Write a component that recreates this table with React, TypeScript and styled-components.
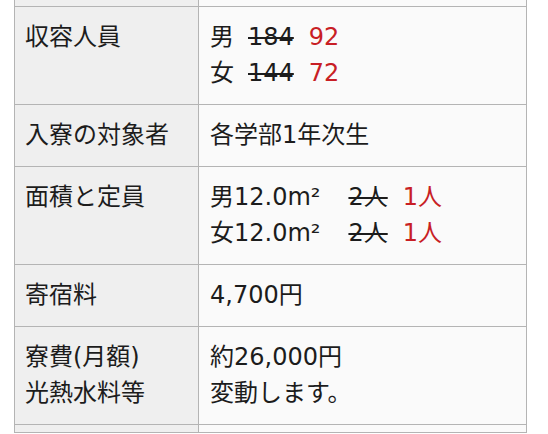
import React from 'react';
import styled, { createGlobalStyle } from 'styled-components';

const GlobalStyle = createGlobalStyle`
  html, body {
    margin: 0;
    padding: 0;
    background: #ffffff;
    overflow: hidden;
  }
`;

const Page = styled.div`
  padding-left: 14px;
  font-family: 'DejaVu Sans', 'Noto Sans CJK JP', sans-serif;
  font-size: 24px;
  line-height: 36px;
  color: #1c1c1c;
`;

const Table = styled.table`
  border-collapse: separate;
  border-spacing: 0;
  table-layout: fixed;
  width: 513px;
`;

const Row = styled.tr<{ $height?: number }>`
  height: ${({ $height }) => ($height ? `${$height}px` : 'auto')};
`;

const Head = styled.th<{ $empty?: boolean }>`
  box-sizing: border-box;
  width: 185px;
  padding: ${({ $empty }) => ($empty ? '0' : '12px 8px 13px 10px')};
  background: #efefef;
  border-left: 1px solid #b4b4b4;
  border-right: 1px solid #b4b4b4;
  border-bottom: 1px solid #b4b4b4;
  text-align: left;
  vertical-align: top;
  font-weight: normal;
  white-space: nowrap;
`;

const Cell = styled.td<{ $empty?: boolean }>`
  box-sizing: border-box;
  width: 328px;
  padding: ${({ $empty }) => ($empty ? '0' : '12px 8px 13px 11px')};
  background: #fafafa;
  border-right: 1px solid #b4b4b4;
  border-bottom: 1px solid #b4b4b4;
  vertical-align: top;
  white-space: nowrap;
`;

const Line = styled.div`
  display: block;
`;

const Old = styled.span<{ $gap?: number }>`
  margin-left: ${({ $gap }) => $gap ?? 0}px;
  text-decoration: line-through;
  text-decoration-thickness: 1.5px;
`;

const New = styled.span<{ $gap?: number }>`
  margin-left: ${({ $gap }) => $gap ?? 0}px;
  color: #c81e25;
`;

const App: React.FC = () => {
  return (
    <Page>
      <GlobalStyle />
      <Table>
        <tbody>
          <Row $height={7}>
            <Head $empty />
            <Cell $empty />
          </Row>
          <Row>
            <Head>収容人員</Head>
            <Cell>
              <Line>
                男<Old $gap={14}>184</Old>
                <New $gap={15}>92</New>
              </Line>
              <Line>
                女<Old $gap={14}>144</Old>
                <New $gap={15}>72</New>
              </Line>
            </Cell>
          </Row>
          <Row>
            <Head>入寮の対象者</Head>
            <Cell>各学部1年次生</Cell>
          </Row>
          <Row>
            <Head>面積と定員</Head>
            <Cell>
              <Line>
                男12.0m²<Old $gap={28}>2人</Old>
                <New $gap={15}>1人</New>
              </Line>
              <Line>
                女12.0m²<Old $gap={28}>2人</Old>
                <New $gap={15}>1人</New>
              </Line>
            </Cell>
          </Row>
          <Row>
            <Head>寄宿料</Head>
            <Cell>4,700円</Cell>
          </Row>
          <Row>
            <Head>
              <Line>寮費(月額)</Line>
              <Line>光熱水料等</Line>
            </Head>
            <Cell>
              <Line>約26,000円</Line>
              <Line>変動します。</Line>
            </Cell>
          </Row>
          <Row $height={8}>
            <Head $empty />
            <Cell $empty />
          </Row>
        </tbody>
      </Table>
    </Page>
  );
};

export default App;
